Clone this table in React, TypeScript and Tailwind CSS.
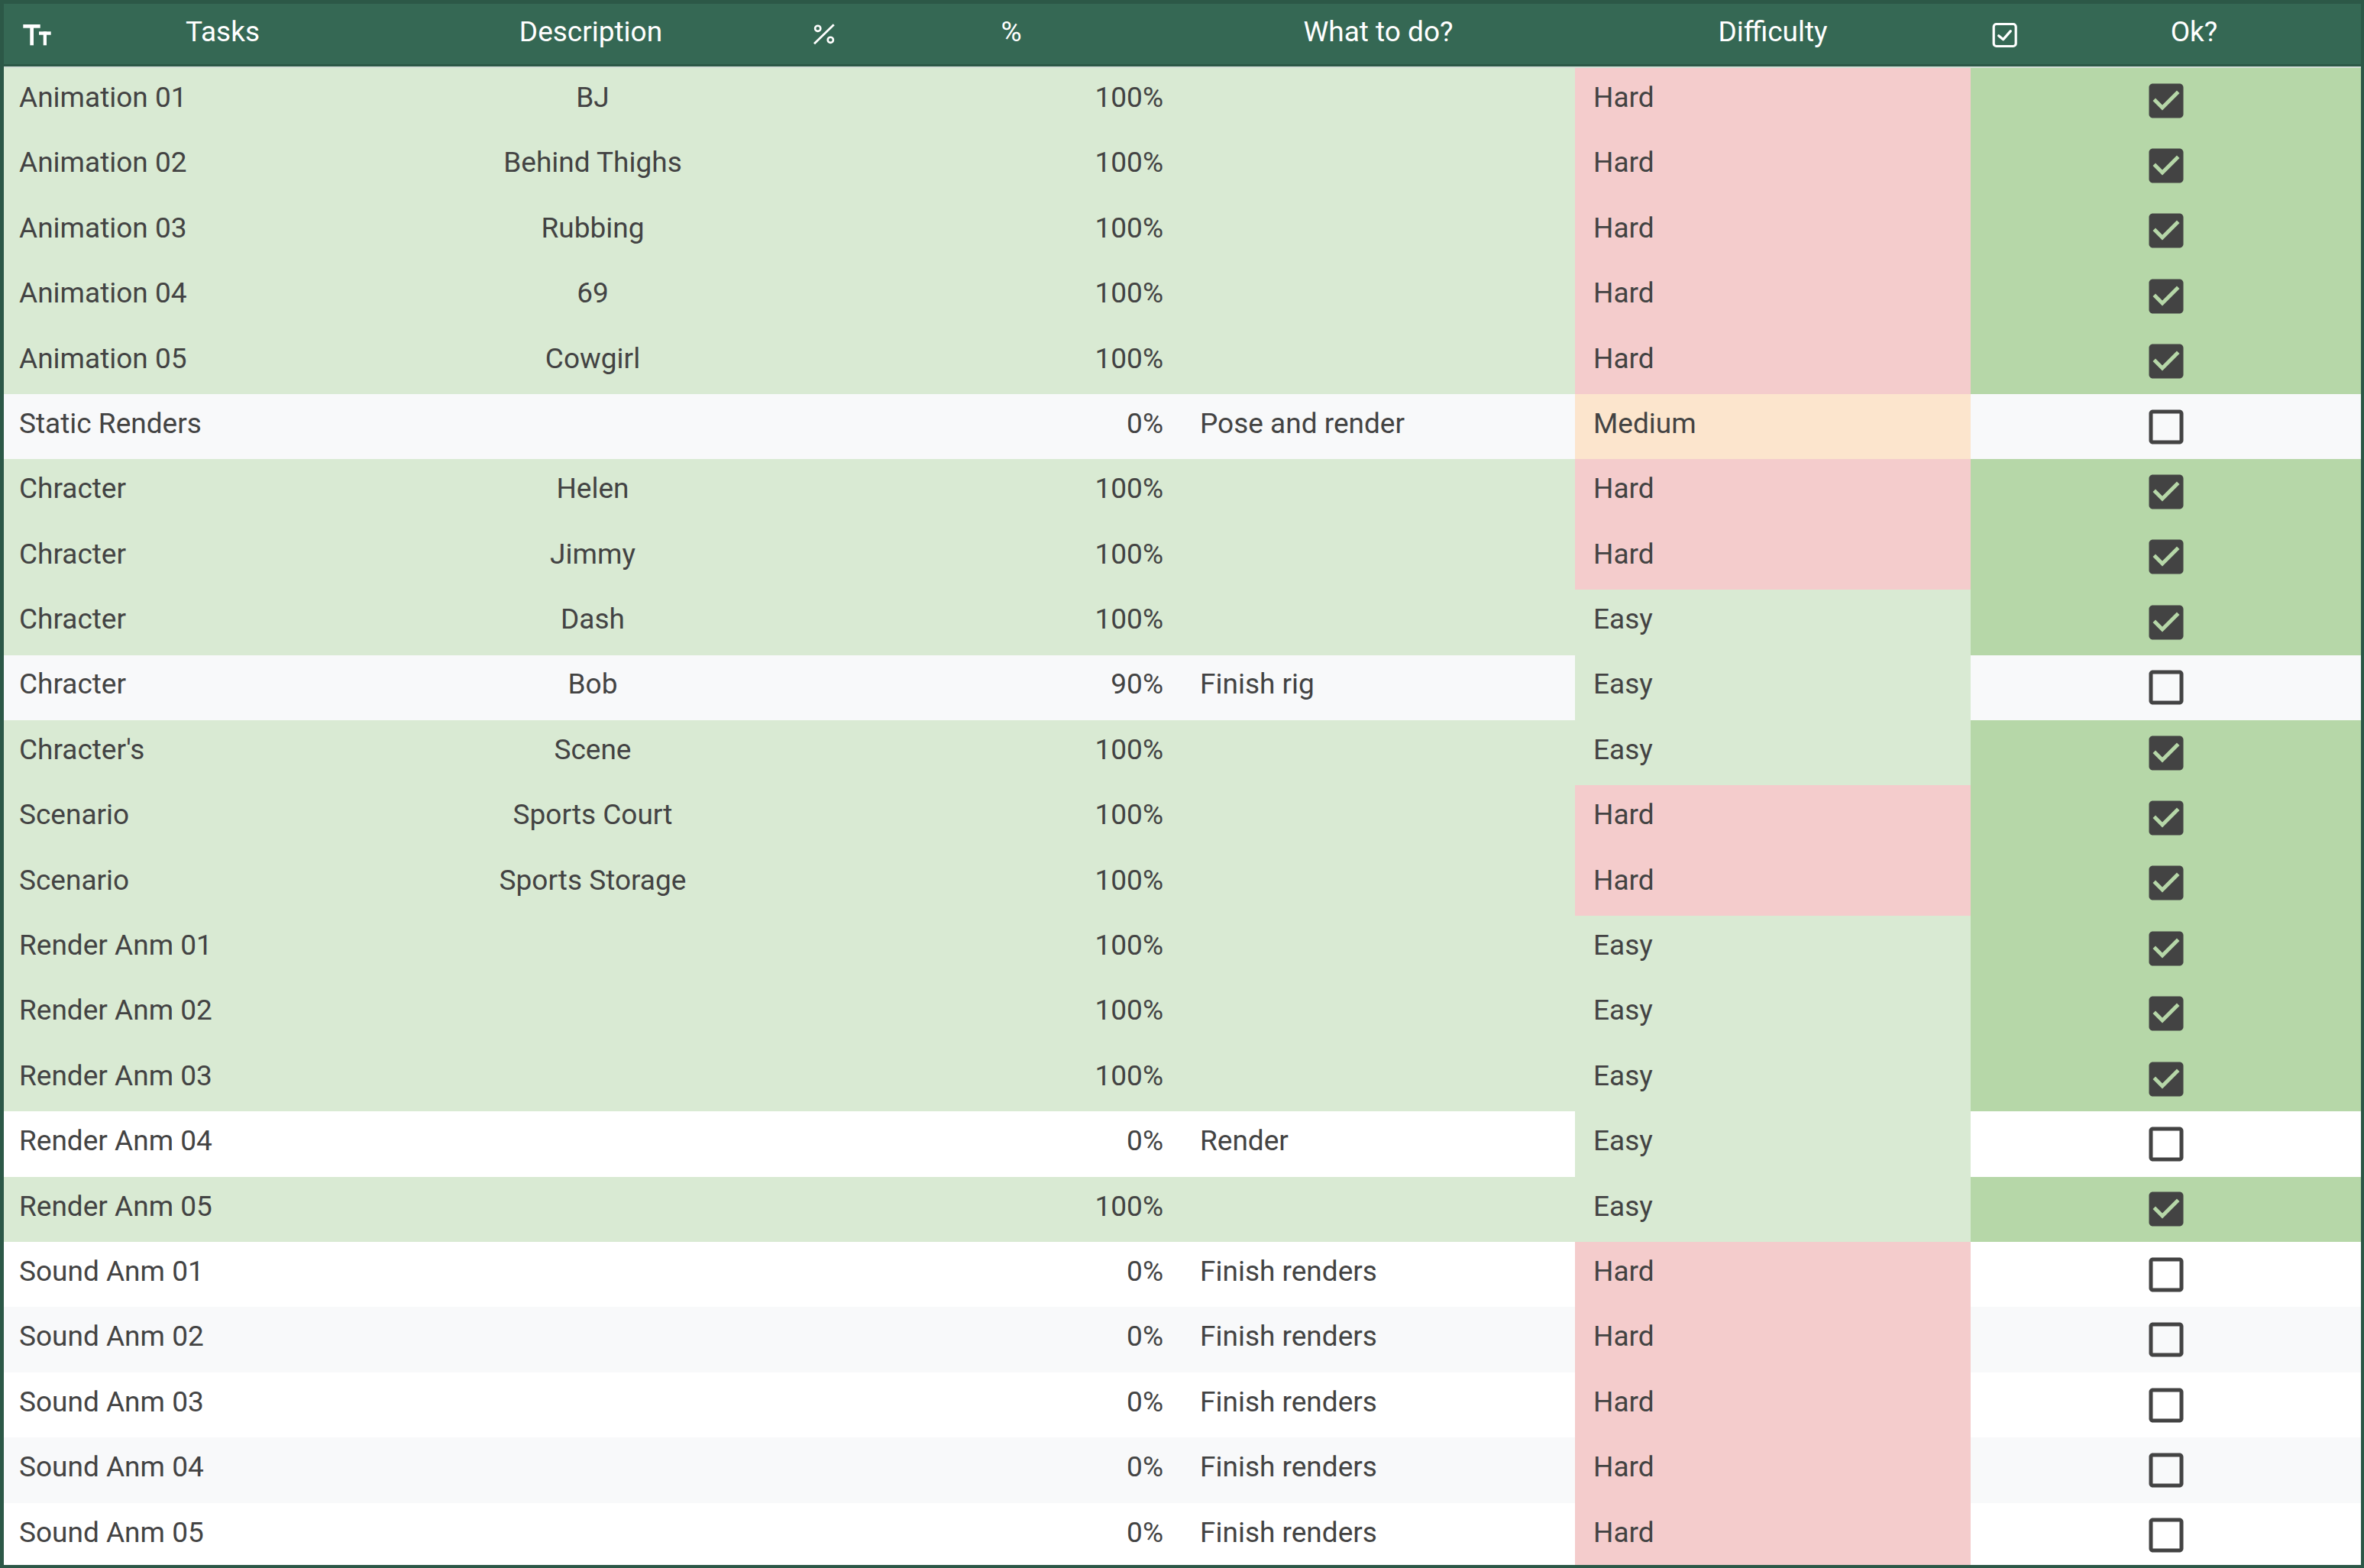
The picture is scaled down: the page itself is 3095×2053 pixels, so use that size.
import React from "react";

type Diff = "Hard" | "Medium" | "Easy";
type Row = [string, string, string, string, Diff, boolean];

const rows: Row[] = [
  ["Animation 01", "BJ", "100%", "", "Hard", true],
  ["Animation 02", "Behind Thighs", "100%", "", "Hard", true],
  ["Animation 03", "Rubbing", "100%", "", "Hard", true],
  ["Animation 04", "69", "100%", "", "Hard", true],
  ["Animation 05", "Cowgirl", "100%", "", "Hard", true],
  ["Static Renders", "", "0%", "Pose and render", "Medium", false],
  ["Chracter", "Helen", "100%", "", "Hard", true],
  ["Chracter", "Jimmy", "100%", "", "Hard", true],
  ["Chracter", "Dash", "100%", "", "Easy", true],
  ["Chracter", "Bob", "90%", "Finish rig", "Easy", false],
  ["Chracter's", "Scene", "100%", "", "Easy", true],
  ["Scenario", "Sports Court", "100%", "", "Hard", true],
  ["Scenario", "Sports Storage", "100%", "", "Hard", true],
  ["Render Anm 01", "", "100%", "", "Easy", true],
  ["Render Anm 02", "", "100%", "", "Easy", true],
  ["Render Anm 03", "", "100%", "", "Easy", true],
  ["Render Anm 04", "", "0%", "Render", "Easy", false],
  ["Render Anm 05", "", "100%", "", "Easy", true],
  ["Sound Anm 01", "", "0%", "Finish renders", "Hard", false],
  ["Sound Anm 02", "", "0%", "Finish renders", "Hard", false],
  ["Sound Anm 03", "", "0%", "Finish renders", "Hard", false],
  ["Sound Anm 04", "", "0%", "Finish renders", "Hard", false],
  ["Sound Anm 05", "", "0%", "Finish renders", "Hard", false],
];

const diffBg: Record<Diff, string> = {
  Hard: "bg-[#f4cccc]",
  Medium: "bg-[#fce5cd]",
  Easy: "bg-[#d9ead3]",
};

const GRID = "grid grid-cols-[511px_515px_516px_515px_518px_1fr]";

function TextIcon() {
  return (
    <svg width="37" height="28" viewBox="0 0 37 28" className="shrink-0 mt-[2px]" fill="#ffffff">
      <rect x="0.3" y="0" width="22.4" height="4.7" />
      <rect x="9.3" y="0" width="4.7" height="27.3" />
      <rect x="21" y="9.3" width="15.7" height="4.4" />
      <rect x="26.7" y="9.3" width="4.3" height="18" />
    </svg>
  );
}

function PercentIcon() {
  return (
    <svg width="30" height="30" viewBox="0 0 30 30" className="shrink-0" fill="none" stroke="#ffffff">
      <line x1="3" y1="27.3" x2="28.7" y2="2.3" strokeWidth="2.8" />
      <circle cx="7.7" cy="7.3" r="3.6" strokeWidth="2.6" />
      <circle cx="24.3" cy="22.3" r="3.6" strokeWidth="2.6" />
    </svg>
  );
}

function CheckHeaderIcon() {
  return (
    <svg width="34" height="34" viewBox="0 0 34 34" className="shrink-0 mt-[2px]" fill="none" stroke="#ffffff">
      <rect x="2.2" y="2.5" width="29" height="29" rx="3.5" strokeWidth="3.2" />
      <polyline points="8.7,17.7 14.7,22.7 24.3,11.7" strokeWidth="3.3" strokeLinecap="round" strokeLinejoin="round" />
    </svg>
  );
}

function Checkbox({ checked }: { checked: boolean }) {
  return (
    <svg width="60" height="60" viewBox="0 0 24 24" fill="#434343">
      {checked ? (
        <path d="M19 3H5c-1.11 0-2 .9-2 2v14c0 1.1.89 2 2 2h14c1.11 0 2-.9 2-2V5c0-1.1-.89-2-2-2zm-9 14l-5-5 1.41-1.41L10 14.17l7.59-7.59L19 8l-9 9z" />
      ) : (
        <path d="M19 5v14H5V5h14m0-2H5c-1.1 0-2 .9-2 2v14c0 1.1.9 2 2 2h14c1.1 0 2-.9 2-2V5c0-1.1-.9-2-2-2z" />
      )}
    </svg>
  );
}

export default function App() {
  return (
    <div className="w-[3095px] h-[2053px] flex flex-col bg-white border-t-[5px] border-l-[5px] border-r-[4px] border-b-[4px] border-[#2c5847] font-[Roboto,sans-serif] text-[37px] text-[#434343] overflow-hidden">
      <div className={`${GRID} h-[79px] shrink-0 bg-[#356854] text-white`}>
        <div className="flex items-center pl-[25px]">
          <TextIcon />
          <span className="flex-1 text-center mb-[6px]">Tasks</span>
        </div>
        <div className="flex items-center justify-center">
          <span className="mb-[6px]">Description</span>
        </div>
        <div className="flex items-center pl-[32px]">
          <PercentIcon />
          <span className="flex-1 text-center mb-[6px] pl-[8px]">%</span>
        </div>
        <div className="flex items-center justify-center">
          <span className="mb-[6px]">What to do?</span>
        </div>
        <div className="flex items-center justify-center">
          <span className="mb-[6px]">Difficulty</span>
        </div>
        <div className="flex items-center pl-[28px]">
          <CheckHeaderIcon />
          <span className="flex-1 text-center mb-[6px] pl-[12px]">Ok?</span>
        </div>
      </div>
      <div className="h-[3px] shrink-0 bg-[#2c5847]" />
      <div className="h-[2px] shrink-0 bg-[#d3dfd6]" />
      <div className="flex-1 min-h-0 flex flex-col overflow-hidden">
        {rows.map(([task, desc, pct, todo, diff, ok], i) => {
          const alt = i % 2 === 1 ? "bg-[#f8f9fa]" : "bg-white";
          const main = pct === "100%" ? "bg-[#d9ead3]" : alt;
          const okBg = ok ? "bg-[#b6d7a8]" : alt;
          return (
            <div key={i} className={`${GRID} h-[85.4px] shrink-0`}>
              <div className={`${main} flex items-center pl-[20px] whitespace-nowrap`}>
                <span className="mb-[8px]">{task}</span>
              </div>
              <div className={`${main} flex items-center justify-center pl-[5px] whitespace-nowrap`}>
                <span className="mb-[8px]">{desc}</span>
              </div>
              <div className={`${main} flex items-center justify-end pr-[24px] whitespace-nowrap`}>
                <span className="mb-[8px]">{pct}</span>
              </div>
              <div className={`${main} flex items-center pl-[24px] whitespace-nowrap`}>
                <span className="mb-[8px]">{todo}</span>
              </div>
              <div className={`${diffBg[diff]} flex items-center pl-[24px] whitespace-nowrap`}>
                <span className="mb-[8px]">{diff}</span>
              </div>
              <div className={`${okBg} flex items-center justify-center`}>
                <Checkbox checked={ok} />
              </div>
            </div>
          );
        })}
      </div>
    </div>
  );
}
